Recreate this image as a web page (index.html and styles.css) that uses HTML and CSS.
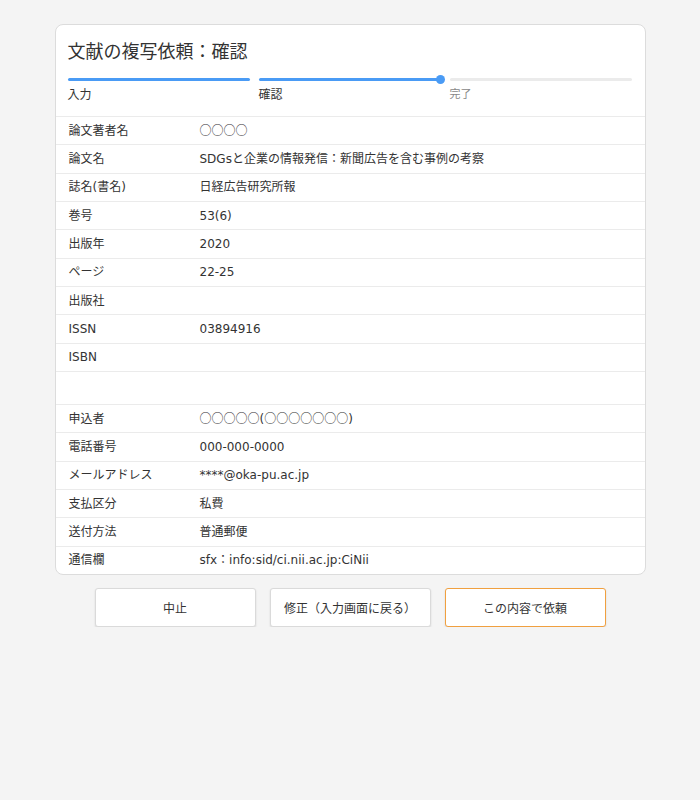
FILE: index.html
```html
<!DOCTYPE html>
<html lang="ja">
<head>
<meta charset="utf-8">
<title>文献の複写依頼：確認</title>
<link rel="stylesheet" href="styles.css">
</head>
<body>
<div class="card">
  <div class="head">
    <h1 class="title">文献の複写依頼：確認</h1>
    <div class="steps">
      <div class="step done"><div class="bar"></div><div class="label">入力</div></div>
      <div class="step current"><div class="bar"><span class="dot"></span></div><div class="label">確認</div></div>
      <div class="step todo"><div class="bar"></div><div class="label">完了</div></div>
    </div>
  </div>
  <table class="info">
    <tr><th>論文著者名</th><td><span class="cjk">○○○○</span></td></tr>
    <tr><th>論文名</th><td>SDGsと企業の情報発信：新聞広告を含む事例の考察</td></tr>
    <tr><th>誌名(書名)</th><td>日経広告研究所報</td></tr>
    <tr><th>巻号</th><td>53(6)</td></tr>
    <tr><th>出版年</th><td>2020</td></tr>
    <tr><th>ページ</th><td>22-25</td></tr>
    <tr><th>出版社</th><td></td></tr>
    <tr><th>ISSN</th><td>03894916</td></tr>
    <tr><th>ISBN</th><td></td></tr>
    <tr class="spacer"><th></th><td></td></tr>
    <tr><th>申込者</th><td><span class="cjk">○○○○○</span>(<span class="cjk">○○○○○○○</span>)</td></tr>
    <tr><th>電話番号</th><td>000-000-0000</td></tr>
    <tr><th>メールアドレス</th><td>****@oka-pu.ac.jp</td></tr>
    <tr><th>支払区分</th><td>私費</td></tr>
    <tr><th>送付方法</th><td>普通郵便</td></tr>
    <tr><th>通信欄</th><td>sfx：info:sid/ci.nii.ac.jp:CiNii</td></tr>
  </table>
</div>
<div class="actions">
  <button class="btn">中止</button>
  <button class="btn">修正（入力画面に戻る）</button>
  <button class="btn primary">この内容で依頼</button>
</div>
</body>
</html>
```
FILE: styles.css
```css
html, body {
  margin: 0;
  padding: 0;
}
body {
  background: #f4f4f4;
  font-family: "DejaVu Sans", "Noto Sans CJK JP", sans-serif;
  color: #333;
  padding-top: 24px;
}
.cjk {
  font-family: "Noto Sans CJK JP", sans-serif;
}
.card {
  width: 589px;
  margin: 0 auto;
  background: #fff;
  border: 1px solid #dcdcdc;
  border-radius: 8px;
  overflow: hidden;
}
.head {
  padding: 12px 13px 12px 12px;
}
.title {
  margin: 0;
  font-family: "Noto Sans CJK JP", sans-serif;
  font-size: 18px;
  font-weight: normal;
  line-height: 26px;
  color: #333;
}
.steps {
  display: grid;
  grid-template-columns: 1fr 1fr 1fr;
  column-gap: 9px;
  margin-top: 15px;
}
.bar {
  position: relative;
  height: 3px;
  border-radius: 2px;
  background: #4a9bf5;
}
.todo .bar {
  background: #ebebeb;
}
.dot {
  position: absolute;
  right: -4px;
  top: -3px;
  width: 9px;
  height: 9px;
  border-radius: 50%;
  background: #4a9bf5;
}
.label {
  margin-top: 5px;
  font-size: 12px;
  line-height: 18px;
  color: #333;
}
.todo .label {
  font-size: 11px;
  color: #888;
  margin-top: 5px;
}
.info {
  width: 100%;
  border-collapse: collapse;
  font-size: 12px;
}
.info tr {
  border-top: 1px solid #ebebeb;
}
.info th, .info td {
  height: 27.33px;
  padding: 0;
  line-height: 18px;
  vertical-align: middle;
  text-align: left;
  font-weight: normal;
}
.info th {
  width: 131px;
  padding-left: 13px;
}
.info td {
  padding-right: 13px;
}
.info .spacer th, .info .spacer td {
  height: 32px;
}
.actions {
  display: flex;
  justify-content: center;
  gap: 14px;
  margin-top: 13px;
}
.btn {
  width: 161px;
  height: 39px;
  background: #fff;
  border: 1px solid #dadada;
  border-radius: 3px;
  box-shadow: 0 1px 2px rgba(0,0,0,0.12);
  font-family: "DejaVu Sans", "Noto Sans CJK JP", sans-serif;
  font-size: 12px;
  color: #333;
  padding: 0;
}
.btn.primary {
  border-color: #f0a040;
}
```
